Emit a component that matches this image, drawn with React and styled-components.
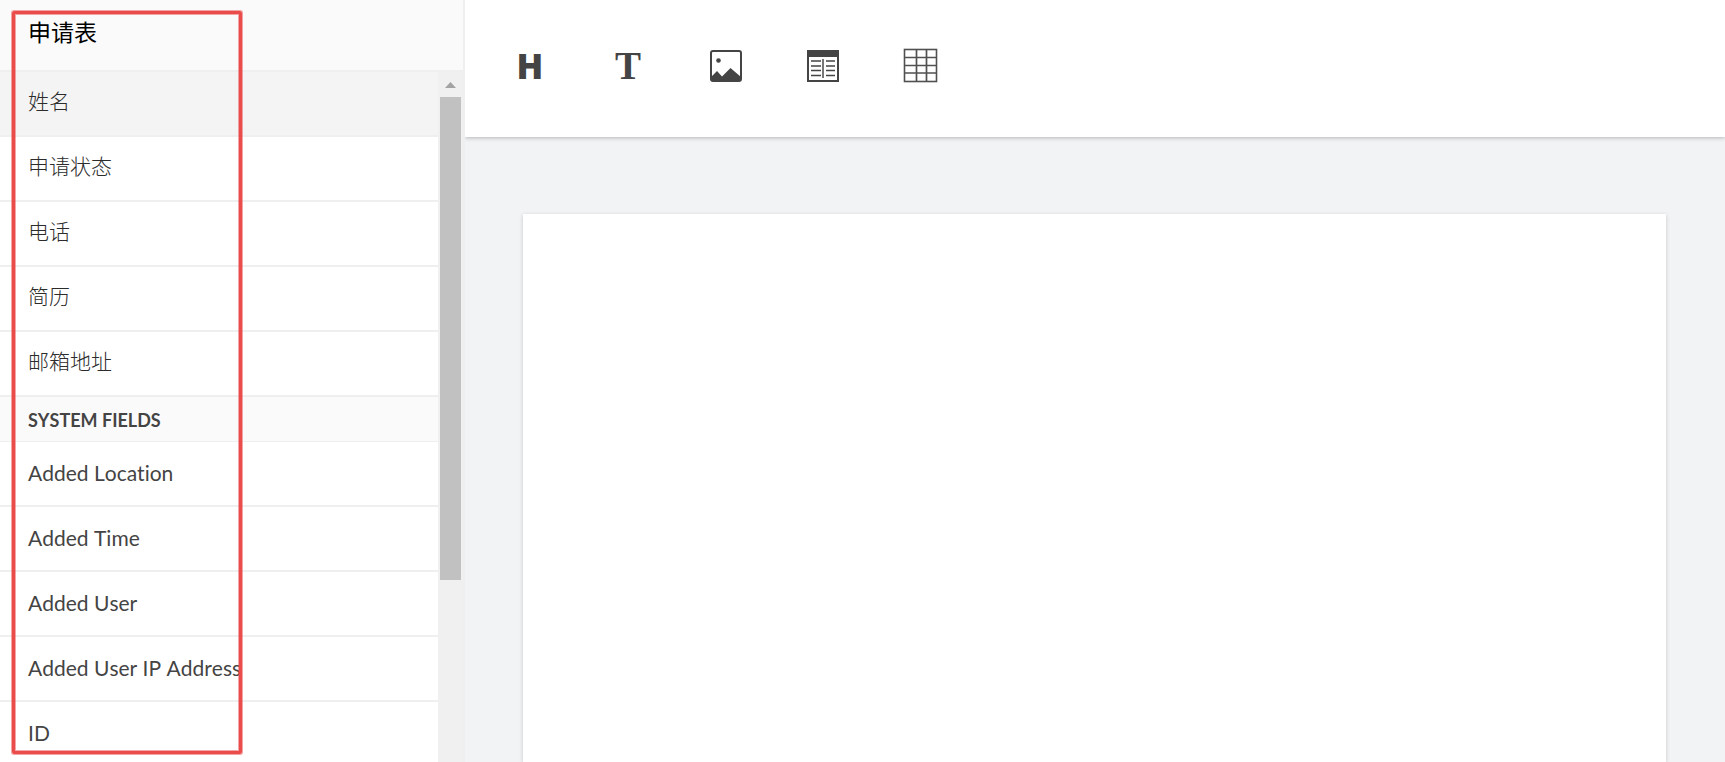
import React from 'react';
import styled, { createGlobalStyle } from 'styled-components';

const GlobalStyle = createGlobalStyle`
  *, *::before, *::after { box-sizing: border-box; }
  body {
    margin: 0;
    background: #f2f3f5;
    color: #444;
    font-family: Lato, 'Noto Sans CJK SC', sans-serif;
    font-variant-ligatures: none;
    font-kerning: none;
    overflow: hidden;
  }
`;

const Page = styled.div`
  position: relative;
  display: flex;
  height: 100vh;
`;

const Sidebar = styled.aside`
  display: flex;
  flex-direction: column;
  flex: 0 0 465px;
  border-right: 2px solid #efefef;
  background: #fff;
`;

const SidebarHeader = styled.header`
  flex: 0 0 72px;
  padding: 14px 28px;
  border-bottom: 2px solid #efefef;
  background: #fafafa;
`;

const Title = styled.h1`
  margin: 0;
  color: #000;
  font-family: 'Noto Sans CJK SC', sans-serif;
  font-size: 23px;
  font-weight: 400;
  line-height: 34px;
`;

const SidebarBody = styled.div`
  display: flex;
  flex: 1;
  min-height: 0;
`;

const Fields = styled.div`
  flex: 1;
  overflow: hidden;
`;

const FieldList = styled.ul`
  margin: 0;
  padding: 0;
  list-style: none;
`;

const Field = styled.li`
  height: 65px;
  padding: 0 28px;
  border-bottom: 2px solid #efefef;
  background: ${({ $active }) => ($active ? '#f4f4f4' : '#fff')};
  color: ${({ $light }) => ($light ? '#2c2c2c' : '#444')};
  font-size: 21px;
  font-weight: ${({ $light }) => ($light ? 300 : 400)};
  line-height: ${({ $light }) => ($light ? 58 : 62)}px;
  white-space: nowrap;
`;

const GroupTitle = styled.h2`
  height: 45px;
  margin: 0;
  padding: 0 28px;
  border-bottom: 1px solid #efefef;
  background: #fafafa;
  font-size: 18px;
  font-weight: 700;
  line-height: 46px;
`;

const ScrollTrack = styled.div`
  display: flex;
  flex-direction: column;
  align-items: center;
  flex: 0 0 25px;
  padding-top: 10px;
  background: #f0f0f0;
`;

const ScrollArrow = styled.svg`
  display: block;
  width: 11px;
  height: 6px;
  margin-bottom: 9px;
`;

const ScrollThumb = styled.div`
  width: 21px;
  height: 71%;
  background: #c1c1c1;
`;

const Main = styled.main`
  display: flex;
  flex-direction: column;
  flex: 1;
  min-width: 0;
  overflow: hidden;
`;

const Toolbar = styled.div`
  position: relative;
  display: flex;
  align-items: flex-start;
  gap: 64px;
  flex: 0 0 137px;
  padding: 49px 48px 0;
  background: #fff;
  box-shadow: 0 1px 4px rgba(0, 0, 0, 0.25);
`;

const Tool = styled.button`
  display: flex;
  justify-content: center;
  width: 34px;
  height: 34px;
  padding: 0;
  border: 0;
  background: none;
  color: #444;
  cursor: pointer;
`;

const Glyph = styled.span`
  font-family: ${({ $serif }) => ($serif ? "'Liberation Serif', serif" : "'Open Sans', sans-serif")};
  font-size: ${({ $serif }) => ($serif ? 39 : 35)}px;
  font-weight: ${({ $serif }) => ($serif ? 700 : 800)};
  line-height: 34px;
`;

const Icon = styled.svg`
  display: block;
  flex: none;
  width: 34px;
  height: 34px;
  overflow: visible;
`;

const Canvas = styled.div`
  display: flex;
  flex: 1;
  min-height: 0;
  padding: 77px 59px 0 58px;
`;

const Paper = styled.section`
  flex: 1;
  background: #fff;
  box-shadow: 0 1px 4px rgba(0, 0, 0, 0.18);
`;

const Highlight = styled.div`
  position: absolute;
  top: 11px;
  bottom: 8px;
  left: 12px;
  width: 230px;
  border: 3px solid #ea4c4c;
  border-radius: 2px;
  box-shadow: 0 0 0 1px rgba(234, 76, 76, 0.5), inset 0 0 0 1px rgba(234, 76, 76, 0.5);
  pointer-events: none;
`;

const formFields = ['姓名', '申请状态', '电话', '简历', '邮箱地址'];
const systemFields = ['Added Location', 'Added Time', 'Added User', 'Added User IP Address', 'ID'];

const ImageIcon = () => (
  <Icon viewBox="1 0 34 34" fill="none">
    <rect x="3" y="2" width="30" height="30" rx="2" stroke="#444" strokeWidth="2" />
    <circle cx="10.5" cy="11.5" r="2.3" fill="#444" />
    <path d="M3 28 9 22l5 5.500 8.500-8.500L33 28v4H3Z" fill="#444" />
  </Icon>
);

const ColumnsIcon = () => (
  <Icon viewBox="1 0 34 34" fill="none" stroke="#444">
    <rect x="2" y="2" width="30" height="30" strokeWidth="2" />
    <path d="M1 4.500h32" strokeWidth="7" />
    <path d="M5 12h10M5 17h10M5 21.500h10M5 26.500h10M20 12h9M20 17h9M20 21.500h9M20 26.500h9" strokeWidth="1.600" />
    <path d="M17 10v19" strokeWidth="2" stroke="#777" />
  </Icon>
);

const TableIcon = () => (
  <Icon viewBox="1 0 34 34" fill="none" stroke="#505050">
    <rect x="0.500" y="0.500" width="32" height="32" strokeWidth="1.600" />
    <path d="M12.500 1v32M22.500 1v32M1 8.500h32M1 16.500h32M1 24h32" strokeWidth="1.700" />
  </Icon>
);

const tools = [
  { name: 'Heading', content: <Glyph>H</Glyph> },
  { name: 'Text', content: <Glyph $serif>T</Glyph> },
  { name: 'Image', content: <ImageIcon /> },
  { name: 'Columns', content: <ColumnsIcon /> },
  { name: 'Table', content: <TableIcon /> },
];

export default function App() {
  return (
    <Page>
      <GlobalStyle />
      <Sidebar>
        <SidebarHeader>
          <Title>申请表</Title>
        </SidebarHeader>
        <SidebarBody>
          <Fields>
            <FieldList>
              {formFields.map((name, i) => (
                <Field key={name} $light $active={i === 0}>{name}</Field>
              ))}
            </FieldList>
            <GroupTitle>SYSTEM FIELDS</GroupTitle>
            <FieldList>
              {systemFields.map((name) => (
                <Field key={name}>{name}</Field>
              ))}
            </FieldList>
          </Fields>
          <ScrollTrack>
            <ScrollArrow viewBox="0 0 11 6">
              <path d="M0 6 5.500 0 11 6Z" fill="#a3a3a3" />
            </ScrollArrow>
            <ScrollThumb />
          </ScrollTrack>
        </SidebarBody>
      </Sidebar>
      <Main>
        <Toolbar>
          {tools.map(({ name, content }) => (
            <Tool key={name} type="button" aria-label={name}>{content}</Tool>
          ))}
        </Toolbar>
        <Canvas>
          <Paper />
        </Canvas>
      </Main>
      <Highlight />
    </Page>
  );
}
